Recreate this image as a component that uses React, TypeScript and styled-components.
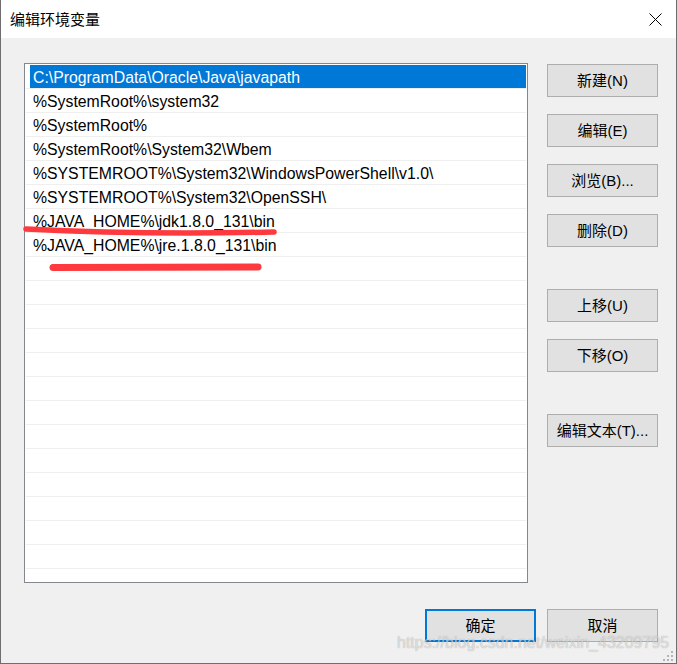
import React from "react";
import styled, { createGlobalStyle } from "styled-components";

const GlobalStyle = createGlobalStyle`
  html, body { margin: 0; padding: 0; background: #f0f0f0; overflow: hidden; }
  * { box-sizing: border-box; }
`;

const FONT = `"Liberation Sans", "Noto Sans CJK SC", sans-serif`;

const Window = styled.div`
  position: relative;
  width: 677px;
  height: 664px;
  display: flex;
  flex-direction: column;
  border: 1px solid #6e6e6e;
  border-top: none;
  font-family: ${FONT};
  color: #000;
`;

const TitleBar = styled.div`
  height: 38px;
  background: #ffffff;
  display: flex;
  align-items: center;
  justify-content: space-between;
  padding: 0 14px 0 9px;
`;

const Title = styled.div`
  font-family: "Noto Sans CJK SC", sans-serif;
  font-size: 15px;
  line-height: 20px;
  padding-bottom: 1px;
`;

const CloseIcon = styled.svg`
  width: 13px;
  height: 13px;
  display: block;
  margin-top: 1px;
`;

const Body = styled.div`
  flex: 1;
  background: #f0f0f0;
  display: flex;
  flex-direction: column;
  padding: 25px 18px 21px 23px;
`;

const Main = styled.div`
  display: flex;
  gap: 19px;
`;

const ListBox = styled.div`
  width: 504px;
  height: 520px;
  border: 1px solid #828790;
  background: #ffffff;
  padding: 1px 1px 0 1px;
  overflow: hidden;
`;

const Row = styled.div`
  height: 24px;
  border-bottom: 1px solid #efefef;
  display: flex;
`;

const Cell = styled.div<{ $selected?: boolean }>`
  flex: 1;
  margin-left: 4px;
  padding: 2px 0 0 3px;
  height: 23px;
  font-size: 15.8px;
  line-height: 22px;
  white-space: nowrap;
  background: ${(p) => (p.$selected ? "#0078d7" : "transparent")};
  color: ${(p) => (p.$selected ? "#ffffff" : "#000000")};
`;

const SideButtons = styled.div`
  display: flex;
  flex-direction: column;
  padding-top: 1px;
`;

const Button = styled.div<{ $gapBefore?: number; $default?: boolean }>`
  width: 111px;
  height: 33px;
  margin-top: ${(p) => p.$gapBefore ?? 0}px;
  background: #e1e1e1;
  border: ${(p) => (p.$default ? "2px solid #0078d7" : "1px solid #adadad")};
  display: flex;
  align-items: center;
  justify-content: center;
  font-family: ${FONT};
  font-size: 15px;
  line-height: 20px;
  white-space: nowrap;
`;

const Footer = styled.div`
  margin-top: 26px;
  display: flex;
  justify-content: flex-end;
  gap: 11px;
`;

const Annotations = styled.svg`
  position: absolute;
  left: 0;
  top: 0;
  width: 677px;
  height: 664px;
  pointer-events: none;
`;

const Watermark = styled.div`
  position: absolute;
  left: 396px;
  top: 633px;
  font-family: "Liberation Sans", sans-serif;
  font-size: 16px;
  line-height: 20px;
  color: rgba(255, 255, 255, 0.6);
  text-shadow: 0 0 1px rgba(0, 0, 0, 0.35);
  pointer-events: none;
  white-space: nowrap;
`;

const Grip = styled.svg`
  position: absolute;
  right: 2px;
  bottom: 1px;
  width: 11px;
  height: 11px;
`;

const entries = [
  "C:\\ProgramData\\Oracle\\Java\\javapath",
  "%SystemRoot%\\system32",
  "%SystemRoot%",
  "%SystemRoot%\\System32\\Wbem",
  "%SYSTEMROOT%\\System32\\WindowsPowerShell\\v1.0\\",
  "%SYSTEMROOT%\\System32\\OpenSSH\\",
  "%JAVA_HOME%\\jdk1.8.0_131\\bin",
  "%JAVA_HOME%\\jre.1.8.0_131\\bin",
];

const rows = [...entries, ...Array(14).fill("")];

const sideButtons: { label: string; gap: number }[] = [
  { label: "新建(N)", gap: 0 },
  { label: "编辑(E)", gap: 17 },
  { label: "浏览(B)...", gap: 17 },
  { label: "删除(D)", gap: 17 },
  { label: "上移(U)", gap: 42 },
  { label: "下移(O)", gap: 17 },
  { label: "编辑文本(T)...", gap: 42 },
];

export default function App() {
  return (
    <>
      <GlobalStyle />
      <Window>
        <TitleBar>
          <Title>编辑环境变量</Title>
          <CloseIcon viewBox="0 0 13 13">
            <path d="M0.5 0.5 L12.5 12.5 M12.5 0.5 L0.5 12.5" stroke="#000" strokeWidth="1" />
          </CloseIcon>
        </TitleBar>
        <Body>
          <Main>
            <ListBox>
              {rows.map((t, i) => (
                <Row key={i}>
                  <Cell $selected={i === 0}>{t}</Cell>
                </Row>
              ))}
            </ListBox>
            <SideButtons>
              {sideButtons.map((b) => (
                <Button key={b.label} $gapBefore={b.gap}>
                  {b.label}
                </Button>
              ))}
            </SideButtons>
          </Main>
          <Footer>
            <Button $default>确定</Button>
            <Button>取消</Button>
          </Footer>
        </Body>
        <Annotations viewBox="0 0 677 664">
          <path d="M25 229 Q140 235 273 232" stroke="#ff3a3f" strokeWidth="5.5" fill="none" strokeLinecap="round" />
          <path d="M52 267.5 L257 267" stroke="#ff3a3f" strokeWidth="7" fill="none" strokeLinecap="round" />
        </Annotations>
        <Watermark>https://blog.csdn.net/weixin_43209795</Watermark>
        <Grip viewBox="0 0 11 11">
          <rect x="8" y="0" width="2" height="2" fill="#b4b4b4" />
          <rect x="4" y="4" width="2" height="2" fill="#b4b4b4" />
          <rect x="8" y="4" width="2" height="2" fill="#b4b4b4" />
          <rect x="0" y="8" width="2" height="2" fill="#b4b4b4" />
          <rect x="4" y="8" width="2" height="2" fill="#b4b4b4" />
          <rect x="8" y="8" width="2" height="2" fill="#b4b4b4" />
        </Grip>
      </Window>
    </>
  );
}
